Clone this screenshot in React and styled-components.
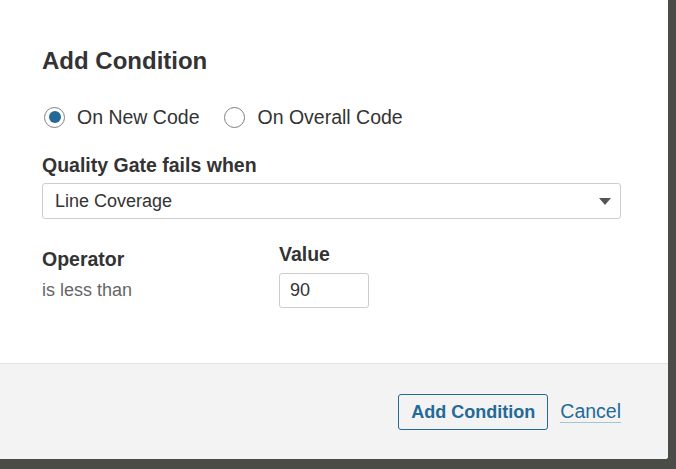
import styled, { createGlobalStyle } from 'styled-components';

const GlobalStyle = createGlobalStyle`
  html, body {
    margin: 0;
    padding: 0;
    background: #4a4c48;
    font-family: "Liberation Sans", Arial, sans-serif;
    color: #333;
  }
`;

const Page = styled.div`
  width: 676px;
  height: 469px;
  overflow: hidden;
`;

const Modal = styled.div`
  width: 668px;
  height: 459px;
  background: #fff;
  border-bottom-right-radius: 3px;
  display: flex;
  flex-direction: column;
  overflow: hidden;
`;

const Body = styled.div`
  flex: 1;
  padding: 46px 47px 0 42px;
  display: flex;
  flex-direction: column;
`;

const Title = styled.h2`
  margin: 0;
  font-size: 24px;
  line-height: 30px;
  font-weight: bold;
  color: #333;
`;

const RadioGroup = styled.div`
  display: flex;
  align-items: center;
  gap: 23px;
  margin-top: 29px;
`;

const RadioItem = styled.label`
  display: flex;
  align-items: center;
  font-size: 19.5px;
  line-height: 24px;
  color: #333;
  cursor: pointer;
`;

const RadioCircle = styled.span`
  box-sizing: border-box;
  width: 21px;
  height: 21px;
  margin-left: 2px;
  margin-right: 12px;
  border-radius: 50%;
  border: 1px solid #808080;
  display: flex;
  align-items: center;
  justify-content: center;

  &::after {
    content: '';
    width: 12px;
    height: 12px;
    border-radius: 50%;
    background: ${(p) => (p.$checked ? '#236a97' : 'transparent')};
  }
`;

const FieldLabel = styled.div`
  font-size: 19.5px;
  line-height: 24px;
  font-weight: bold;
  color: #333;
  margin-top: ${(p) => p.$mt || 0}px;
`;

const Select = styled.div`
  box-sizing: border-box;
  margin-top: 6px;
  height: 36px;
  border: 1px solid #cdcdcd;
  border-radius: 3px;
  padding: 0 9px 0 12px;
  display: flex;
  align-items: center;
  justify-content: space-between;
  font-size: 18px;
  line-height: 34px;
  color: #333;
`;

const Caret = styled.span`
  width: 0;
  height: 0;
  border-left: 6px solid transparent;
  border-right: 6px solid transparent;
  border-top: 7px solid #555;
`;

const Row = styled.div`
  display: flex;
  margin-top: 23px;
`;

const Column = styled.div`
  display: flex;
  flex-direction: column;
  gap: 7px;
  width: ${(p) => p.$w || 'auto'};
  padding-top: ${(p) => p.$pt || 0}px;
`;

const Muted = styled.div`
  font-size: 18px;
  line-height: 24px;
  color: #666;
`;

const ValueInput = styled.div`
  box-sizing: border-box;
  width: 90px;
  height: 35px;
  border: 1px solid #cdcdcd;
  border-radius: 3px;
  padding: 0 10px;
  font-size: 18px;
  line-height: 33px;
  color: #333;
`;

const Footer = styled.div`
  height: 96px;
  box-sizing: border-box;
  border-top: 1px solid #e4e4e4;
  background: #f3f3f3;
  padding: 30px 47px 0 0;
  display: flex;
  justify-content: flex-end;
  align-items: baseline;
  gap: 12px;
`;

const PrimaryButton = styled.button`
  box-sizing: border-box;
  height: 36px;
  padding: 0 12px;
  border: 1px solid #236a97;
  border-radius: 3px;
  background: transparent;
  color: #236a97;
  font-family: "Liberation Sans", Arial, sans-serif;
  font-size: 18px;
  font-weight: bold;
  line-height: 34px;
  cursor: pointer;
`;

const LinkButton = styled.a`
  display: inline-block;
  font-size: 19.5px;
  line-height: 22px;
  color: #236a97;
  text-decoration: none;
  border-bottom: 1px solid #a9c3d6;
  cursor: pointer;
`;

export default function App() {
  return (
    <Page>
      <GlobalStyle />
      <Modal>
        <Body>
          <Title>Add Condition</Title>
          <RadioGroup>
            <RadioItem>
              <RadioCircle $checked />
              On New Code
            </RadioItem>
            <RadioItem>
              <RadioCircle />
              On Overall Code
            </RadioItem>
          </RadioGroup>

          <FieldLabel $mt={24}>Quality Gate fails when</FieldLabel>
          <Select>
            <span>Line Coverage</span>
            <Caret />
          </Select>

          <Row>
            <Column $w="237px" $pt={5}>
              <FieldLabel>Operator</FieldLabel>
              <Muted>is less than</Muted>
            </Column>
            <Column>
              <FieldLabel>Value</FieldLabel>
              <ValueInput>90</ValueInput>
            </Column>
          </Row>
        </Body>
        <Footer>
          <PrimaryButton>Add Condition</PrimaryButton>
          <LinkButton>Cancel</LinkButton>
        </Footer>
      </Modal>
    </Page>
  );
}
